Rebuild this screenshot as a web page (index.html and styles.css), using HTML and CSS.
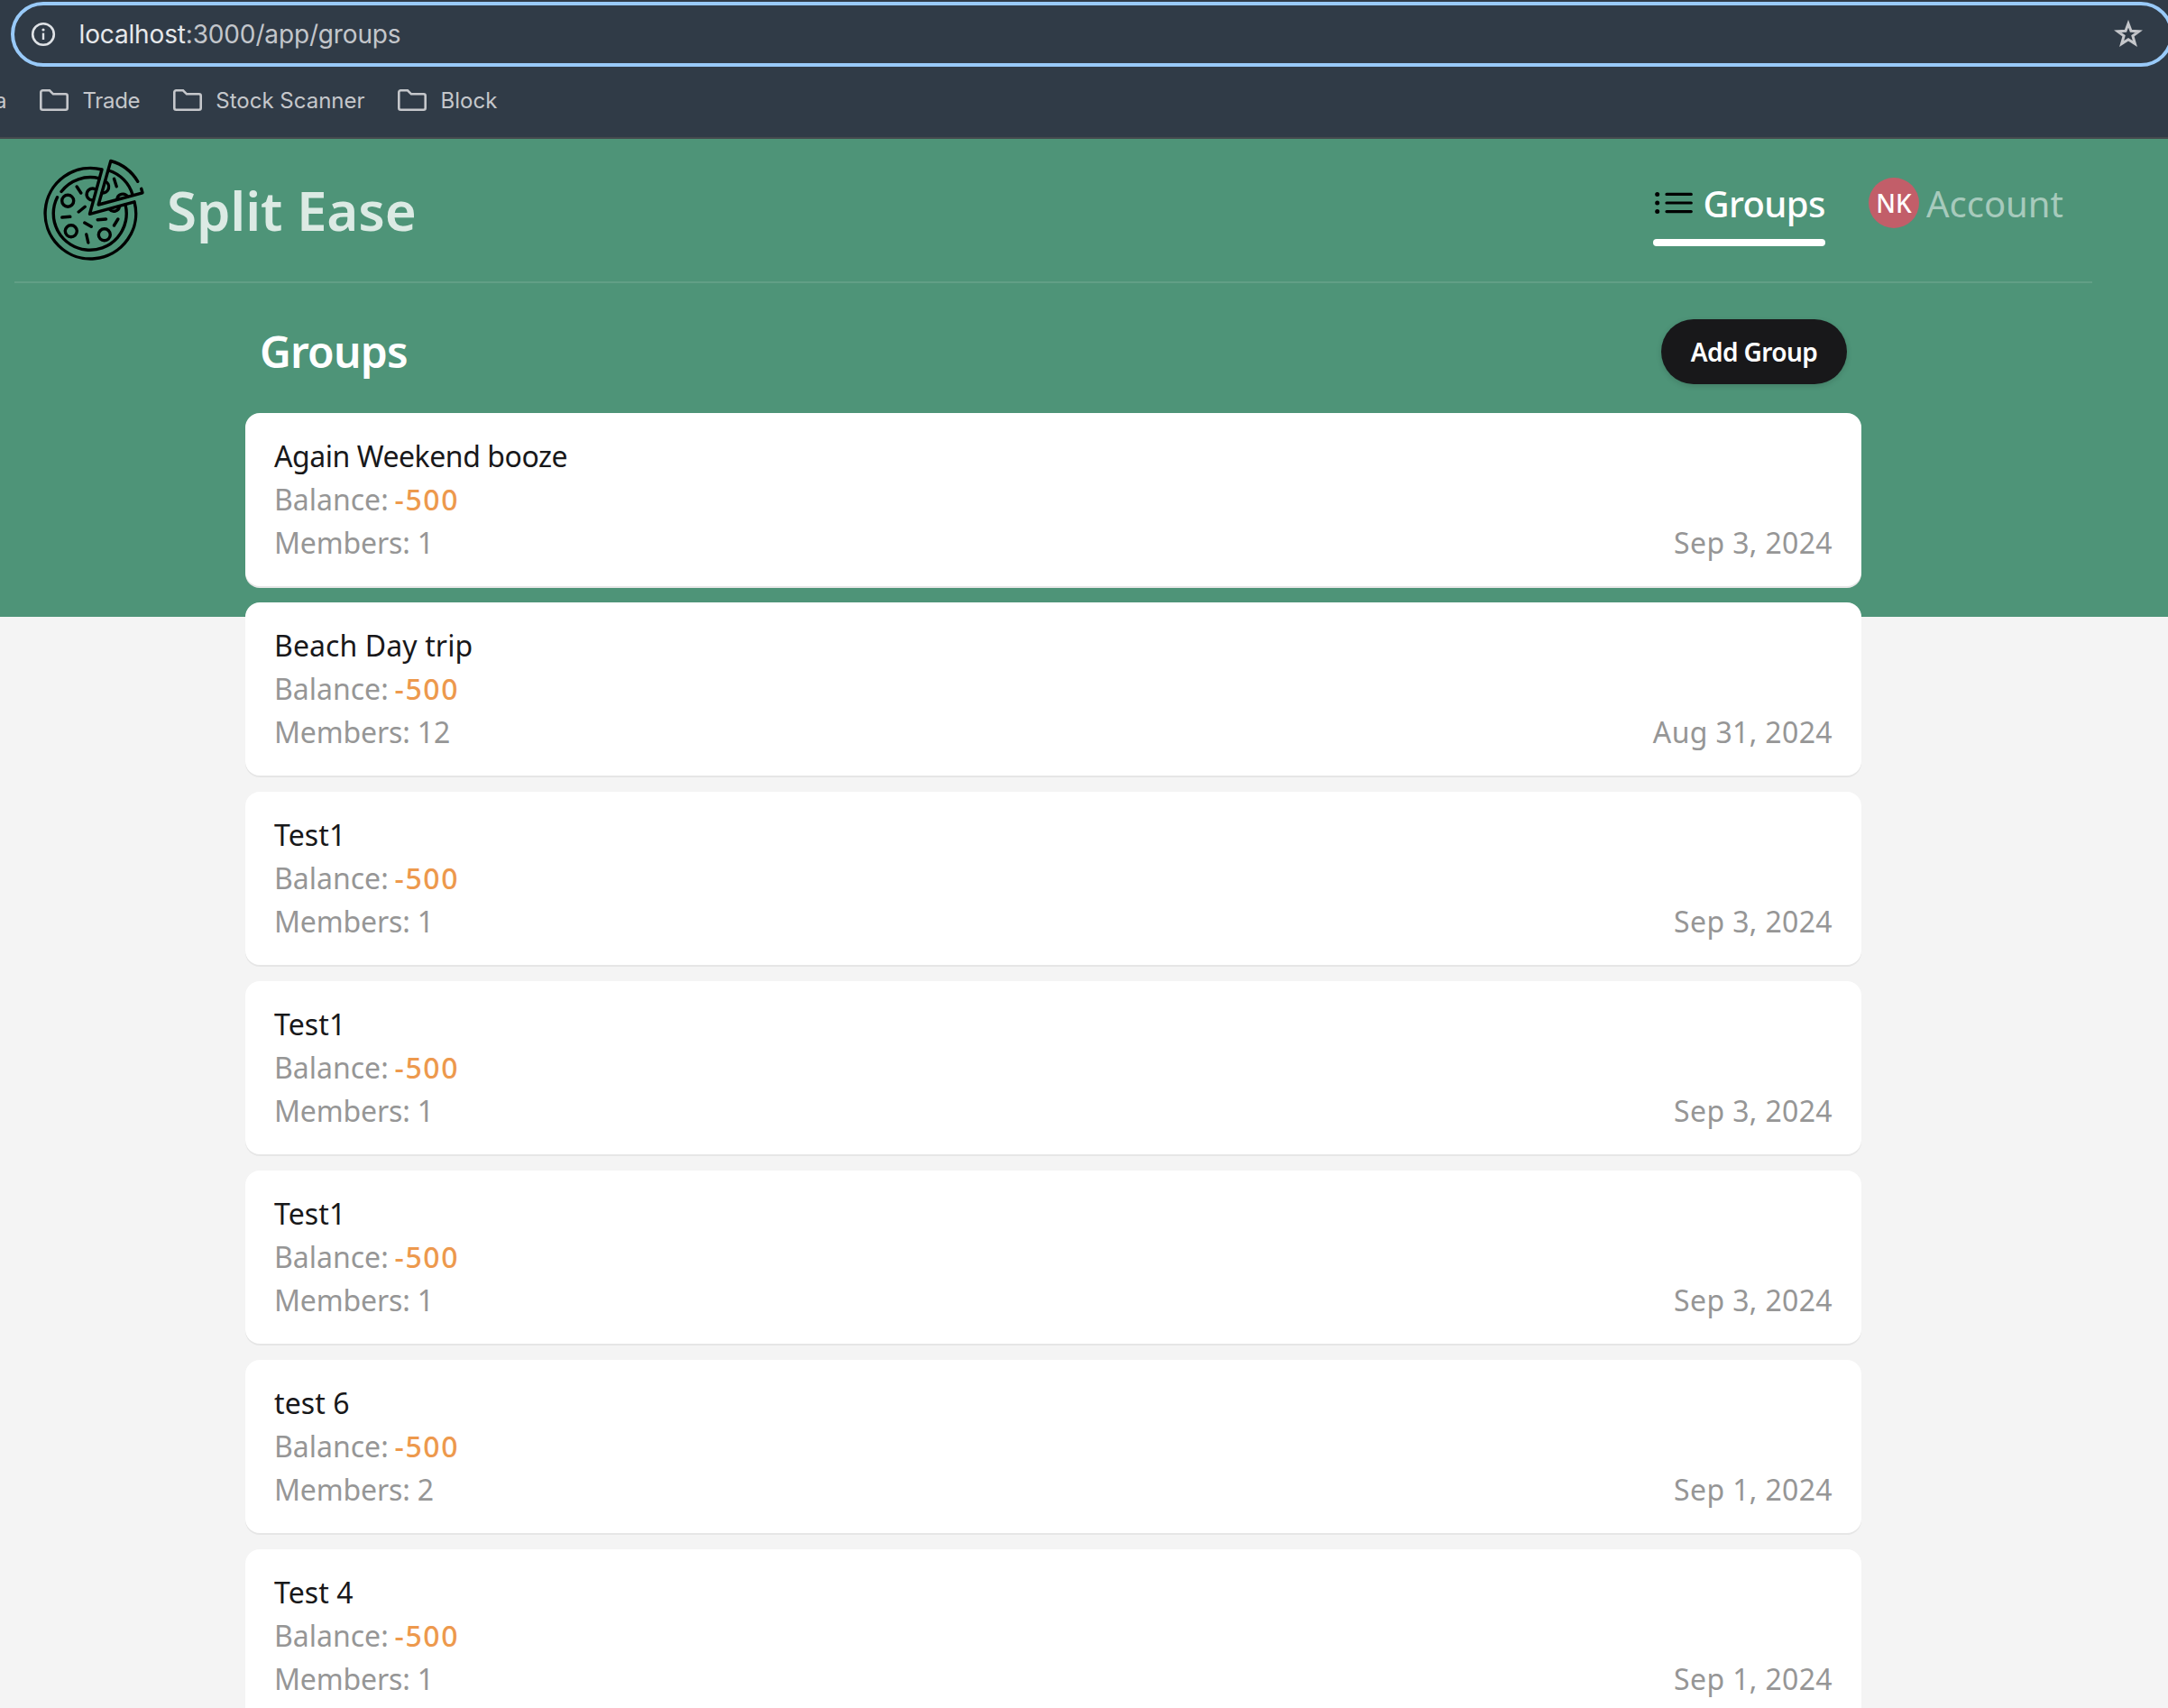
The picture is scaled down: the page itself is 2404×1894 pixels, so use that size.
FILE: index.html
```html
<!DOCTYPE html>
<html lang="en">
<head>
<meta charset="utf-8">
<title>Split Ease</title>
<link rel="stylesheet" href="styles.css">
</head>
<body>
<div class="browser">
  <div class="omnibox">
    <svg class="info-icon" viewBox="0 0 28 28"><circle cx="14" cy="14" r="11.8" fill="none" stroke="#dfe2e6" stroke-width="2.6"/><path d="M14 12.6V20" stroke="#dfe2e6" stroke-width="2.4"/><circle cx="14" cy="9" r="1.6" fill="#dfe2e6"/></svg>
    <span class="url"><span class="host">localhost</span>:3000/app/groups</span>
    <svg class="star-icon" viewBox="0 0 32 32"><path d="M16 4.2l3 8.1 8.8.4-6.900 5.200 2.500 8.700-7.400-4.900-7.400 4.900 2.500-8.700-6.900-5.200 8.800-.4z"/></svg>
  </div>
  <div class="bookmarks">
    <span class="bookmark bookmark-cut">a</span>
    <span class="bookmark bookmark-trade"><svg viewBox="0 0 32 24"><path d="M1.300 20.700V3.300a2 2 0 0 1 2-2H11l4 4h13.700a2 2 0 0 1 2 2v13.400a2 2 0 0 1-2 2H3.300a2 2 0 0 1-2-2z"/></svg>Trade</span>
    <span class="bookmark"><svg viewBox="0 0 32 24"><path d="M1.300 20.700V3.300a2 2 0 0 1 2-2H11l4 4h13.700a2 2 0 0 1 2 2v13.400a2 2 0 0 1-2 2H3.300a2 2 0 0 1-2-2z"/></svg>Stock Scanner</span>
    <span class="bookmark"><svg viewBox="0 0 32 24"><path d="M1.300 20.700V3.300a2 2 0 0 1 2-2H11l4 4h13.700a2 2 0 0 1 2 2v13.400a2 2 0 0 1-2 2H3.300a2 2 0 0 1-2-2z"/></svg>Block</span>
  </div>
</div>
<div class="app">
  <header class="header">
    <div class="brand">
      <svg class="logo" viewBox="0.500 0 112 112">
        <path d="M65.500 11A50.300 50.300 0 1 0 101.500 46.800L52 60.300z"/>
        <path d="M20.500 35.500A40.500 40.500 0 0 1 62.800 20.900M16 41.700A40.500 40.500 0 1 0 91.500 49.800"/>
        <path d="M105.300 24.300A50.800 50.800 0 0 0 75.300 1.500L61.700 50 110.500 36.800 109.200 32.300"/>
        <path d="M73 12A40 40 0 0 1 99.500 39"/>
        <circle cx="27.700" cy="45.700" r="6.500"/><circle cx="31.300" cy="79.300" r="6.500"/><circle cx="68.300" cy="83.300" r="6.500"/>
        <path d="M59 33.300A6.500 6.500 0 1 0 56 45M69 24A6.800 6.800 0 0 1 65.500 37M82.300 44A6.400 6.400 0 0 1 94 41M73.800 55A6.400 6.400 0 0 0 85 52"/>
        <path d="M37.700 30l4.600 7M46.700 52.300l-7 5.700M21.300 64l9-.7M46.300 70l7.400 4.300M60.700 66.700l9.300-.7M83.300 66L79 73M48.300 83l2 9M79 21.300l2.700 8.500"/>
      </svg>
      <span class="brand-name">Split Ease</span>
    </div>
    <nav class="nav">
      <a class="nav-link active">
        <svg class="list-icon" viewBox="0 0 44 28"><circle cx="4.700" cy="4.400" r="2.500"/><circle cx="4.700" cy="14" r="2.500"/><circle cx="4.700" cy="23.600" r="2.500"/><path d="M15 4.400h27.300M15 14h27.300M15 23.600h27.300"/></svg>
        <span class="nav-label">Groups</span>
      </a>
      <a class="nav-link">
        <span class="avatar">NK</span>
        <span>Account</span>
      </a>
    </nav>
  </header>
  <main class="content">
    <div class="title-row">
      <h1>Groups</h1>
      <button class="add">Add Group</button>
    </div>
    <ul class="groups">
      <li class="card"><div class="name tight">Again Weekend booze</div><div class="line">Balance: <span class="amount">-500</span></div><div class="line foot"><span class="members">Members: 1</span><span class="date">Sep 3, 2024</span></div></li>
      <li class="card"><div class="name">Beach Day trip</div><div class="line">Balance: <span class="amount">-500</span></div><div class="line foot"><span class="members">Members: 12</span><span class="date">Aug 31, 2024</span></div></li>
      <li class="card"><div class="name">Test1</div><div class="line">Balance: <span class="amount">-500</span></div><div class="line foot"><span class="members">Members: 1</span><span class="date">Sep 3, 2024</span></div></li>
      <li class="card"><div class="name">Test1</div><div class="line">Balance: <span class="amount">-500</span></div><div class="line foot"><span class="members">Members: 1</span><span class="date">Sep 3, 2024</span></div></li>
      <li class="card"><div class="name">Test1</div><div class="line">Balance: <span class="amount">-500</span></div><div class="line foot"><span class="members">Members: 1</span><span class="date">Sep 3, 2024</span></div></li>
      <li class="card"><div class="name">test 6</div><div class="line">Balance: <span class="amount">-500</span></div><div class="line foot"><span class="members">Members: 2</span><span class="date">Sep 1, 2024</span></div></li>
      <li class="card"><div class="name">Test 4</div><div class="line">Balance: <span class="amount">-500</span></div><div class="line foot"><span class="members">Members: 1</span><span class="date">Sep 1, 2024</span></div></li>
    </ul>
  </main>
</div>
</body>
</html>
```
FILE: styles.css
```css
* { box-sizing: border-box; }
html { height: 100%; overflow: hidden; }
body {
  margin: 0;
  height: 100%;
  overflow: hidden;
  font-family: "Noto Sans", sans-serif;
  background: #f4f4f4;
}
svg { flex: none; display: block; }

/* Browser chrome */
.browser {
  height: 154px;
  padding-top: 2px;
  background: #303b47;
  border-bottom: 2px solid #454a4e;
  font-family: Inter, sans-serif;
  overflow: hidden;
}
.omnibox {
  display: flex;
  align-items: center;
  width: 2398px;
  height: 72px;
  margin-left: 12px;
  padding: 0 30px 0 18px;
  border: 4px solid #99caf9;
  border-radius: 36px;
}
.info-icon { width: 28px; height: 28px; }
.url {
  flex: 1;
  margin-left: 25.5px;
  font-size: 28px;
  line-height: 40px;
  letter-spacing: -0.15px;
  color: #c3c6cb;
}
.host { color: #e6e8eb; }
.star-icon { width: 32px; height: 32px; fill: none; stroke: #c5c7cb; stroke-width: 3; }
.bookmarks {
  display: flex;
  align-items: center;
  gap: 36.5px;
  height: 74px;
  font-size: 24px;
  color: #c5c7cb;
}
.bookmark { display: flex; align-items: center; gap: 15.5px; }
.bookmark svg { width: 32px; height: 24px; fill: none; stroke: #c5c7cb; stroke-width: 2.6; }
.bookmark-cut { margin-left: -6px; }
.bookmark-trade { letter-spacing: -0.3px; }

/* App */
.app {
  height: 1740px;
  overflow: hidden;
  background: linear-gradient(#4e9478, #4e9478) no-repeat 0 0 / 100% 530px;
}
.header {
  display: flex;
  justify-content: space-between;
  width: 2304px;
  height: 160px;
  margin-left: 16px;
  padding: 0 32px;
  border-bottom: 2px solid #619f86;
}
.brand { display: flex; align-items: center; gap: 25px; }
.logo {
  width: 112px;
  height: 112px;
  fill: none;
  stroke: #000;
  stroke-width: 3.4;
  stroke-linecap: round;
  stroke-linejoin: round;
  overflow: visible;
}
.brand-name {
  font-size: 60px;
  line-height: 72px;
  font-weight: 600;
  letter-spacing: -0.1px;
  color: #dceae4;
}
.nav { display: flex; gap: 48px; padding-top: 43px; }
.nav-link {
  display: flex;
  align-items: center;
  gap: 8px;
  height: 56px;
  font-size: 40px;
  color: #a7cabc;
}
.active {
  position: relative;
  width: 191px;
  gap: 11.5px;
  color: #fff;
}
.active::after {
  content: "";
  position: absolute;
  left: 0;
  right: 0;
  bottom: -20px;
  height: 8px;
  border-radius: 4px;
  background: #fff;
}
.list-icon { width: 44px; height: 28px; stroke-width: 3.2; stroke-linecap: round; }
.list-icon path { stroke: #000; }
.nav-label { letter-spacing: -0.6px; font-weight: 500; }
.avatar {
  display: flex;
  align-items: center;
  justify-content: center;
  width: 56px;
  height: 56px;
  border-radius: 50%;
  background: #c25e69;
  color: #fff;
  font-size: 28px;
  font-weight: 500;
}

.content { width: 1792px; margin-left: 272px; }
.title-row {
  display: flex;
  align-items: center;
  justify-content: space-between;
  padding: 40px 16px 32px;
}
h1 {
  margin: 0;
  font-size: 48px;
  line-height: 72px;
  font-weight: 600;
  letter-spacing: -0.8px;
  color: #fff;
}
.add {
  width: 206px;
  height: 72px;
  padding: 0;
  border: 0;
  border-radius: 36px;
  background: #18181a;
  box-shadow: 0 2px 6px rgba(0, 0, 0, 0.15);
  color: #fff;
  font: 600 28px/40px "Noto Sans", sans-serif;
  letter-spacing: -0.58px;
}
.groups {
  display: flex;
  flex-direction: column;
  gap: 18px;
  margin: 0;
  padding: 0;
  list-style: none;
}
.card {
  height: 192px;
  padding: 24px 32px;
  border-radius: 16px;
  background: #fff;
  box-shadow: 0 2px 0 #e6e6e6;
  font-size: 32px;
  line-height: 48px;
  color: #969696;
}
.name { font-weight: 450; letter-spacing: 0.1px; color: #18181a; }
.tight { letter-spacing: -0.45px; }
.foot { display: flex; justify-content: space-between; }
.amount {
  margin-left: -1.5px;
  font-weight: 500;
  letter-spacing: 1.6px;
  color: #ed994d;
}
.members { letter-spacing: -0.15px; }
.date { letter-spacing: 0.35px; }
```
